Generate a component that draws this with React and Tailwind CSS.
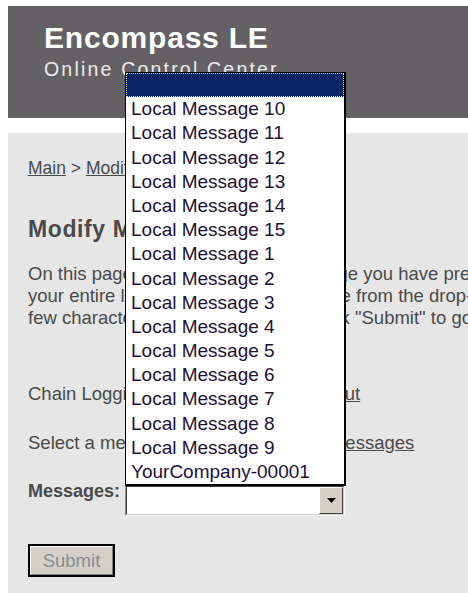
import React from "react";

const items = [
  "",
  "Local Message 10",
  "Local Message 11",
  "Local Message 12",
  "Local Message 13",
  "Local Message 14",
  "Local Message 15",
  "Local Message 1",
  "Local Message 2",
  "Local Message 3",
  "Local Message 4",
  "Local Message 5",
  "Local Message 6",
  "Local Message 7",
  "Local Message 8",
  "Local Message 9",
  "YourCompany-00001",
];

// Open drop-down of the "Messages" select, drawn above the page
function MessageList() {
  return (
    <div className="absolute left-[125px] top-[72px] w-[221px] bg-white border border-black border-r-2 border-b-2 z-10">
      {items.map((label, i) =>
        i === 0 ? (
          <div key={i} className="h-[24.2px] bg-[#0a2468] border border-dotted border-[#e9e3a8]" />
        ) : (
          <div
            key={i}
            className="h-[24.2px] leading-[24.2px] pl-[5px] text-[19px] text-[#1e1038] whitespace-nowrap"
          >
            {label}
          </div>
        )
      )}
    </div>
  );
}

export default function App() {
  return (
    <div
      className="relative w-[468px] h-[593px] overflow-hidden bg-white"
      style={{ fontFamily: '"Liberation Sans", Arial, sans-serif' }}
    >
      {/* page banner */}
      <div className="ml-[8px] mt-[6px] h-[112px] w-[900px] bg-[#646164] pl-[36px] pt-[15px]">
        <div className="text-[30px] leading-[34px] font-bold text-white tracking-[0.8px]">
          Encompass LE
        </div>
        <div className="mt-[3px] text-[19.5px] leading-[22px] text-[#ececec] tracking-[2.2px]">
          Online Control Center
        </div>
      </div>

      {/* main panel */}
      <div className="ml-[8px] mt-[15px] w-[900px] h-[600px] bg-[#e6e6e6] pl-[20px] pt-[25px] text-[#4a4a4a]">
        <div className="text-[17.5px] leading-[20px] whitespace-nowrap">
          <a className="underline">Main</a> &gt; <a className="underline">Modify Messages</a>
        </div>

        <div className="mt-[39px] text-[23px] leading-[25px] font-bold tracking-[0.6px] whitespace-nowrap">
          Modify Messages
        </div>

        <div className="mt-[21px] text-[18.5px] leading-[22px] whitespace-nowrap">
          <div>On this page you can modify a message you have previously created. To see</div>
          <div>your entire list of messages, or use one from the drop-down list. Or type the first</div>
          <div>few characters of its message and click "Submit" to go on.</div>
        </div>

        <div className="mt-[54px] text-[18.5px] leading-[22px] whitespace-nowrap">
          Chain Logging is now Enabled - <a className="underline">Log Out</a>
        </div>

        <div className="mt-[27px] text-[18.5px] leading-[22px] whitespace-nowrap">
          Select a message to modify, <a className="underline">view all messages</a>
        </div>

        <div className="mt-[26px] flex items-start">
          <div className="w-[97px] text-[18px] leading-[22px] font-bold whitespace-nowrap">
            Messages:
          </div>
          <div className="mt-[5px] w-[220px] h-[31px] border border-t-[#8a8a8a] border-l-[#8a8a8a] border-b-[#f6f6f6] border-r-[#f6f6f6]">
            <div className="flex h-full border border-t-[#404040] border-l-[#404040] border-b-[#d4d0c8] border-r-[#d4d0c8] bg-white">
              <div className="flex-1" />
              <div className="w-[24px] h-full bg-[#d4d0c8] border border-t-white border-l-white border-b-[#404040] border-r-[#404040] flex items-center justify-center">
                <svg width="9" height="5" viewBox="0 0 9 5">
                  <path d="M0 0h9L4.5 5z" fill="#000" />
                </svg>
              </div>
            </div>
          </div>
        </div>

        <div className="mt-[28px]">
          <div className="w-[87px] h-[33px] border-2 border-black bg-[#d4d0c8]">
            <div className="h-full border border-t-white border-l-white border-b-[#808080] border-r-[#808080] flex items-center justify-center text-[18.5px] text-[#8b8b93]">
              Submit
            </div>
          </div>
        </div>
      </div>

      <MessageList />
    </div>
  );
}
